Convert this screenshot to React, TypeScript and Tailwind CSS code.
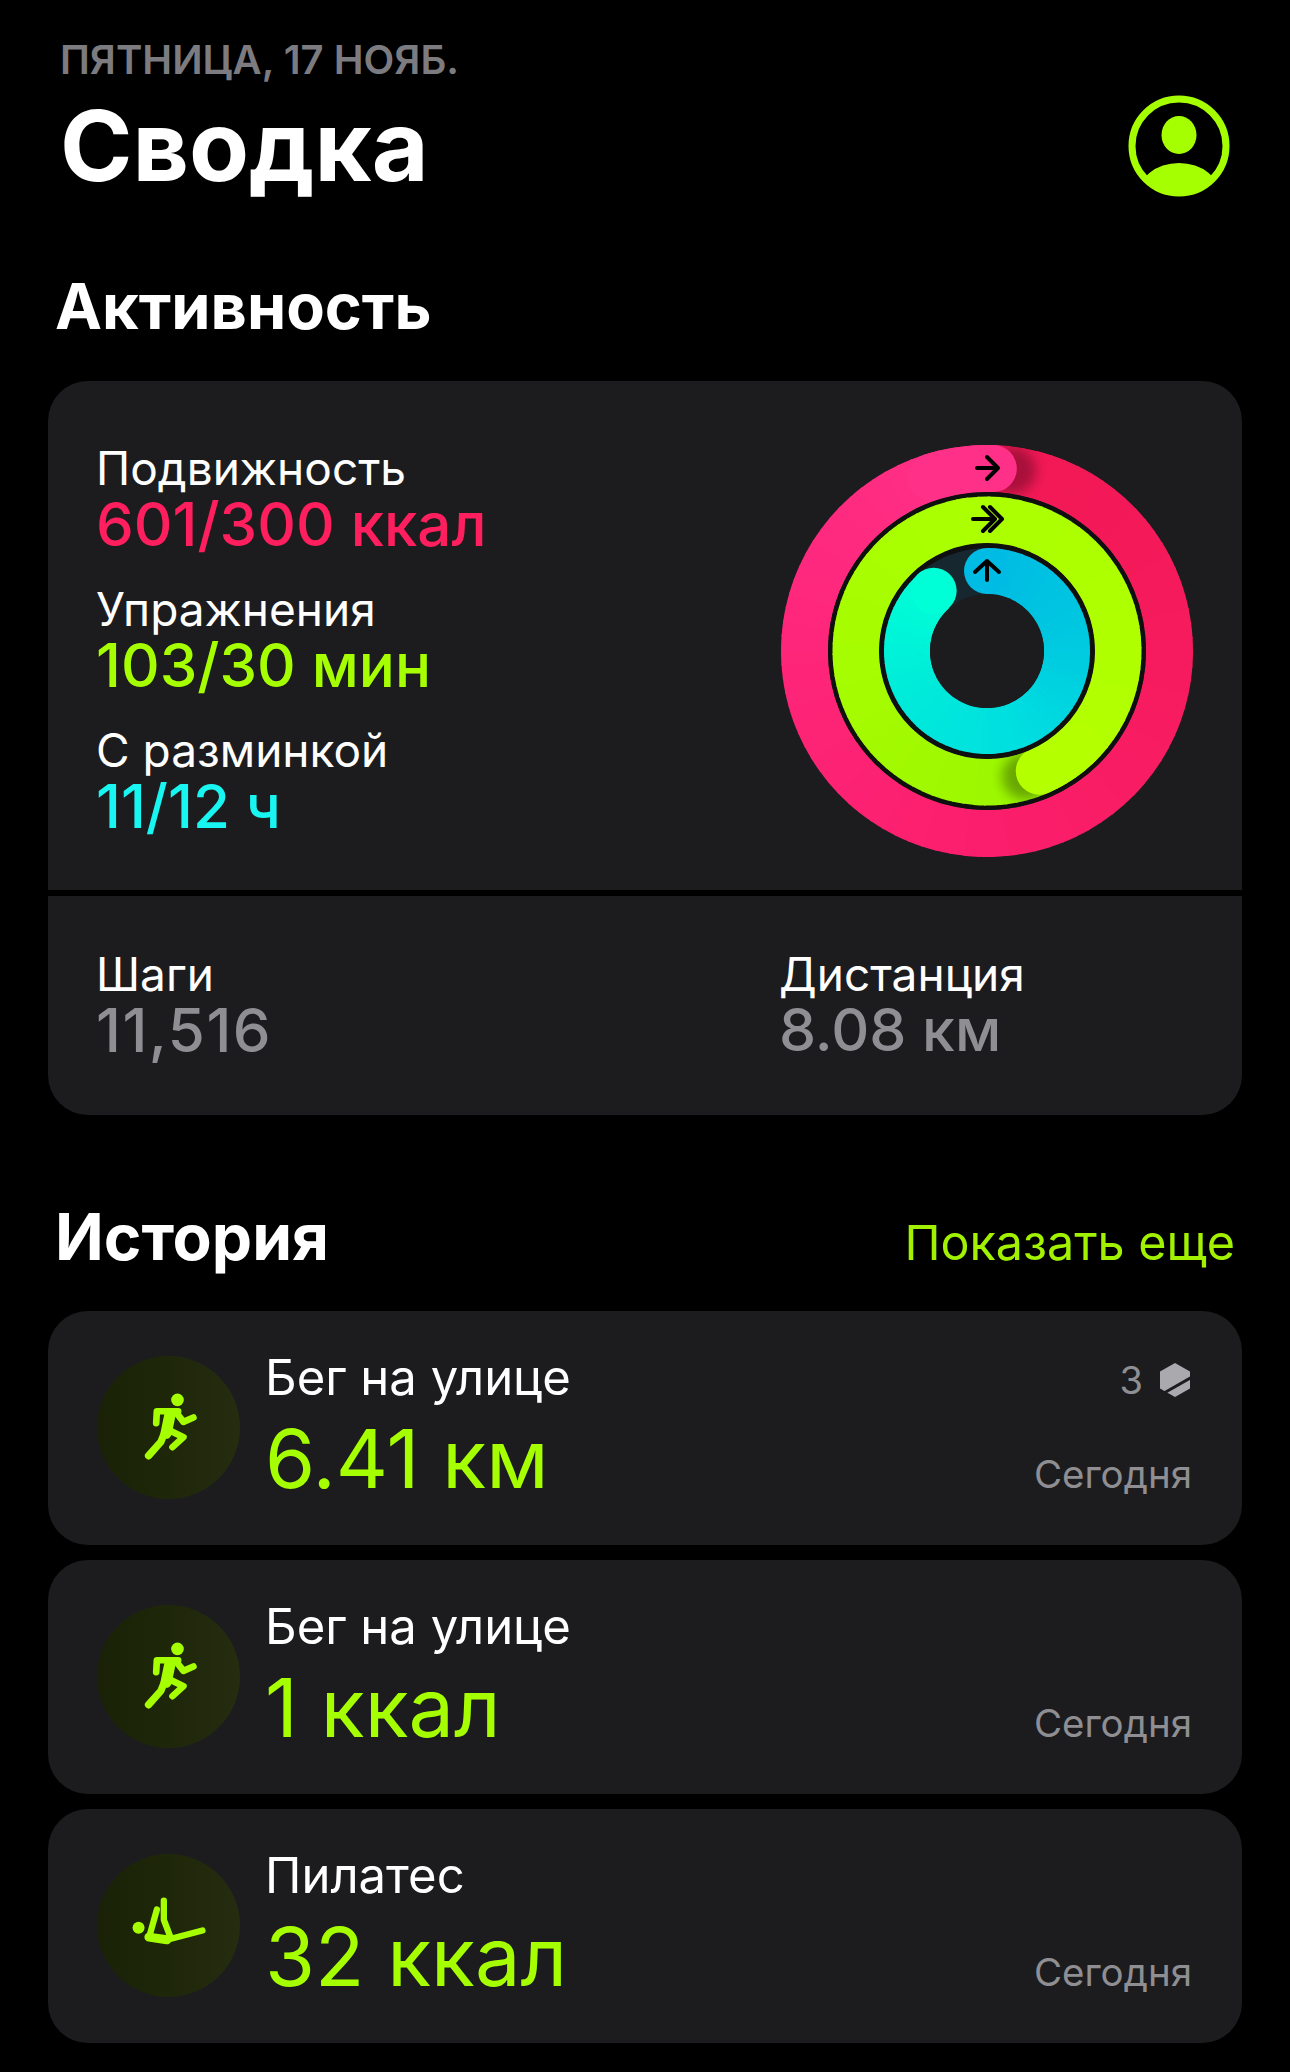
import React from "react";

const polar = (r: number, deg: number) => {
  const a = (deg * Math.PI) / 180;
  return { x: 210 + r * Math.sin(a), y: 210 - r * Math.cos(a) };
};

type Stop = [number, number, number];

const mix = (stops: Stop[], t: number) => {
  const p = Math.min(t, 0.9999) * (stops.length - 1);
  const i = Math.floor(p);
  const f = p - i;
  const c = stops[i].map((v, k) => Math.round(v + (stops[i + 1][k] - v) * f));
  return `rgb(${c[0]},${c[1]},${c[2]})`;
};

function arcPath(r: number, a: number, b: number) {
  const s = polar(r, a);
  const e = polar(r, b);
  return `M${s.x.toFixed(2)} ${s.y.toFixed(2)}A${r} ${r} 0 0 1 ${e.x.toFixed(2)} ${e.y.toFixed(2)}`;
}

function Sweep({ r, w, from, to, stops }: { r: number; w: number; from: number; to: number; stops: Stop[] }) {
  const n = Math.ceil((to - from) / 4);
  const step = (to - from) / n;
  return (
    <>
      {Array.from({ length: n }, (_, i) => (
        <path
          key={i}
          d={arcPath(r, from + i * step, Math.min(to, from + (i + 1) * step + 0.6))}
          fill="none"
          stroke={mix(stops, (i + 0.5) / n)}
          strokeWidth={w}
        />
      ))}
    </>
  );
}

const pinkStops: Stop[] = [
  [241, 24, 84],
  [246, 27, 94],
  [251, 30, 108],
  [254, 38, 122],
  [255, 48, 136],
];
const limeStops: Stop[] = [
  [154, 246, 0],
  [165, 251, 0],
  [170, 255, 0],
  [174, 255, 0],
  [180, 255, 0],
];
const cyanStops: Stop[] = [
  [0, 187, 227],
  [0, 200, 224],
  [0, 223, 224],
  [0, 234, 218],
  [0, 255, 214],
];

function Rings() {
  const h1 = 2;
  const h2 = 156.5;
  const s1 = polar(182.5, h1 + 6);
  const s2 = polar(131, h2 + 6.5);
  const e3 = 318.5;
  const c3 = polar(80.5, e3);
  const c0 = polar(80, 0);
  return (
    <svg width="420" height="420" viewBox="0 0 420 420" className="block shrink-0 mt-[1px]">
      <defs>
        <filter id="blur" x="-50%" y="-50%" width="200%" height="200%">
          <feGaussianBlur stdDeviation="6" />
        </filter>
        <clipPath id="ring1">
          <path clipRule="evenodd" d="M210 4a206 206 0 1 1 0 412a206 206 0 1 1 0-412zM210 51a159 159 0 1 0 0 318a159 159 0 1 0 0-318z" />
        </clipPath>
        <clipPath id="ring2">
          <path clipRule="evenodd" d="M210 55a155 155 0 1 1 0 310a155 155 0 1 1 0-310zM210 102a108 108 0 1 0 0 216a108 108 0 1 0 0-216z" />
        </clipPath>
      </defs>

      <Sweep r={182.5} w={47} from={h1} to={h1 + 360} stops={pinkStops} />
      <g clipPath="url(#ring1)">
        <circle cx={s1.x} cy={s1.y} r="23.5" fill="#000" opacity="0.3" filter="url(#blur)" />
      </g>
      <path d={arcPath(182.5, h1 - 20, h1)} fill="none" stroke="rgb(255,48,136)" strokeWidth="47" strokeLinecap="round" />

      <circle cx="210" cy="210" r="159" fill="#0f0f10" />
      <Sweep r={131} w={47} from={h2} to={h2 + 360} stops={limeStops} />
      <g clipPath="url(#ring2)">
        <circle cx={s2.x} cy={s2.y} r="23.5" fill="#000" opacity="0.32" filter="url(#blur)" />
      </g>
      <path d={arcPath(131, h2 - 20, h2)} fill="none" stroke="rgb(180,255,0)" strokeWidth="47" strokeLinecap="round" />

      <circle cx="210" cy="210" r="108" fill="#0f0f10" />
      <circle cx="210" cy="210" r="103" fill="#162730" />
      <Sweep r={80} w={46} from={0} to={e3} stops={cyanStops} />
      <circle cx={c0.x} cy={c0.y} r="23" fill="rgb(0,187,227)" />
      <circle cx={c3.x} cy={c3.y} r="23" fill="rgb(0,255,214)" />
      <circle cx="210" cy="210" r="57" fill="#1c1c1e" />

      <g fill="none" stroke="#000" strokeWidth="4" strokeLinecap="round" strokeLinejoin="round">
        <path d="M200 27H220M210 16L221 27L210 38" />
        <path d="M196 78H218M206 66L218 78L206 90M213 66L225 78L213 90" />
        <path d="M210 139V120M198 131L210 120L222 131" />
      </g>
    </svg>
  );
}

function Runner() {
  return (
    <svg viewBox="48 48 430 430" className="w-[143px] h-[143px] block" fill="none" stroke="#a6ff00" strokeLinecap="round" strokeLinejoin="round">
      <circle cx="290" cy="180" r="19" fill="#a6ff00" stroke="none" />
      <path d="M226 250L228 214H292" strokeWidth="20" />
      <path d="M286 218L308 246L338 233" strokeWidth="20" />
      <path d="M268 222L256 280" strokeWidth="34" />
      <path d="M258 262L240 306L203 348" strokeWidth="22" />
      <path d="M262 270L308 292L275 322" strokeWidth="20" />
    </svg>
  );
}

function Pilates() {
  return (
    <svg viewBox="48 40 430 430" className="w-[143px] h-[143px] block" fill="none" stroke="#a6ff00" strokeLinecap="round" strokeLinejoin="round">
      <circle cx="173" cy="262" r="18" fill="#a6ff00" stroke="none" />
      <path d="M249 180V238L268 288" strokeWidth="19" />
      <path d="M228 207L207 282" strokeWidth="19" />
      <path d="M204 290L258 298" strokeWidth="27" />
      <path d="M262 297L365 270" strokeWidth="19" />
    </svg>
  );
}

function Badge() {
  return (
    <svg width="34" height="36" viewBox="0 0 34 36" className="block">
      <path d="M17 1L32 9.5V26.5L17 35L2 26.5V9.5Z" fill="#a9a9ae" strokeLinejoin="round" />
      <path d="M6 31L34 15" stroke="#1c1c1e" strokeWidth="3" fill="none" />
    </svg>
  );
}

function Stat({ label, value, color }: { label: string; value: string; color: string }) {
  return (
    <div className="mb-[29px]">
      <div className="text-[46px] leading-[56px] text-white">{label}</div>
      <div className={`text-[60px] leading-[56px] font-medium ${color}`}>{value}</div>
    </div>
  );
}

function HistoryCard({ title, value, icon, badge }: { title: string; value: string; icon: React.ReactNode; badge?: boolean }) {
  return (
    <div className="h-[234px] rounded-[40px] bg-[#1c1c1e] flex items-start pl-[49px] pr-[50px]">
      <div className="mt-[45px] w-[143px] h-[143px] rounded-full bg-gradient-to-r from-[#192206] to-[#252c10] shrink-0">{icon}</div>
      <div className="ml-[25px] pt-[39px]">
        <div className="text-[49px] leading-[56px] text-white">{title}</div>
        <div className="mt-[8px] text-[81px] leading-[90px] font-normal text-[#a6ff00]">{value}</div>
      </div>
      <div className="ml-auto self-stretch flex flex-col justify-between items-end pt-[47px] pb-[49px]">
        <div className="h-[44px] flex items-center gap-[15px] text-[38px] text-[#8e8e93]">
          {badge ? (
            <>
              <span>3</span>
              <Badge />
            </>
          ) : null}
        </div>
        <div className="text-[38.5px] leading-[44px] text-[#8e8e93]">Сегодня</div>
      </div>
    </div>
  );
}

export default function App() {
  return (
    <div className="w-[1290px] h-[2072px] bg-black overflow-hidden font-['Inter',sans-serif] text-white">
      <header className="pt-[40px] pl-[60px] pr-[59px] flex justify-between items-start">
        <div>
          <div className="text-[40px] leading-[40px] font-semibold text-[#7c7c80]">ПЯТНИЦА, 17 НОЯБ.</div>
          <h1 className="mt-[11px] text-[98px] leading-[110px] font-bold">Сводка</h1>
        </div>
        <svg width="104" height="104" viewBox="0 0 104 104" className="mt-[54px] block">
          <defs>
            <clipPath id="prof">
              <circle cx="52" cy="52" r="47" />
            </clipPath>
          </defs>
          <circle cx="52" cy="52" r="47" fill="none" stroke="#a6ff00" strokeWidth="7" />
          <ellipse cx="52" cy="41" rx="17.5" ry="19" fill="#a6ff00" />
          <g clipPath="url(#prof)">
            <ellipse cx="52" cy="103" rx="42" ry="34" fill="#a6ff00" />
          </g>
        </svg>
      </header>

      <section className="px-[48px]">
        <h2 className="mt-[70px] pl-[7px] text-[63px] leading-[70px] font-bold">Активность</h2>
        <div className="mt-[40px] rounded-[40px] overflow-hidden">
          <div className="h-[509px] bg-[#1c1c1e] flex justify-between items-start pt-[59px] pl-[48px] pr-[45px]">
            <div>
              <Stat label="Подвижность" value="601/300 ккал" color="text-[#ff1f5f]" />
              <Stat label="Упражнения" value="103/30 мин" color="text-[#a6ff00]" />
              <Stat label="С разминкой" value="11/12 ч" color="text-[#19f5f0]" />
            </div>
            <Rings />
          </div>
          <div className="mt-[6px] h-[219px] bg-[#1c1c1e] flex pt-[50px] pl-[48px]">
            <div className="w-[683px]">
              <div className="text-[46px] leading-[56px]">Шаги</div>
              <div className="text-[60px] leading-[56px] font-medium tracking-[1.5px] text-[#8e8e93]">11,516</div>
            </div>
            <div>
              <div className="text-[46px] leading-[56px]">Дистанция</div>
              <div className="text-[59px] leading-[56px] font-medium text-[#8e8e93]">8.08 км</div>
            </div>
          </div>
        </div>

        <div className="mt-[87px] flex justify-between items-start pl-[7px] pr-[7px]">
          <h2 className="text-[64px] leading-[70px] font-bold">История</h2>
          <a className="mt-[11px] text-[48.5px] leading-[60px] text-[#a2f200]">Показать еще</a>
        </div>

        <div className="mt-[38px] flex flex-col gap-[15px]">
          <HistoryCard title="Бег на улице" value="6.41 км" icon={<Runner />} badge />
          <HistoryCard title="Бег на улице" value="1 ккал" icon={<Runner />} />
          <HistoryCard title="Пилатес" value="32 ккал" icon={<Pilates />} />
        </div>
      </section>
    </div>
  );
}
